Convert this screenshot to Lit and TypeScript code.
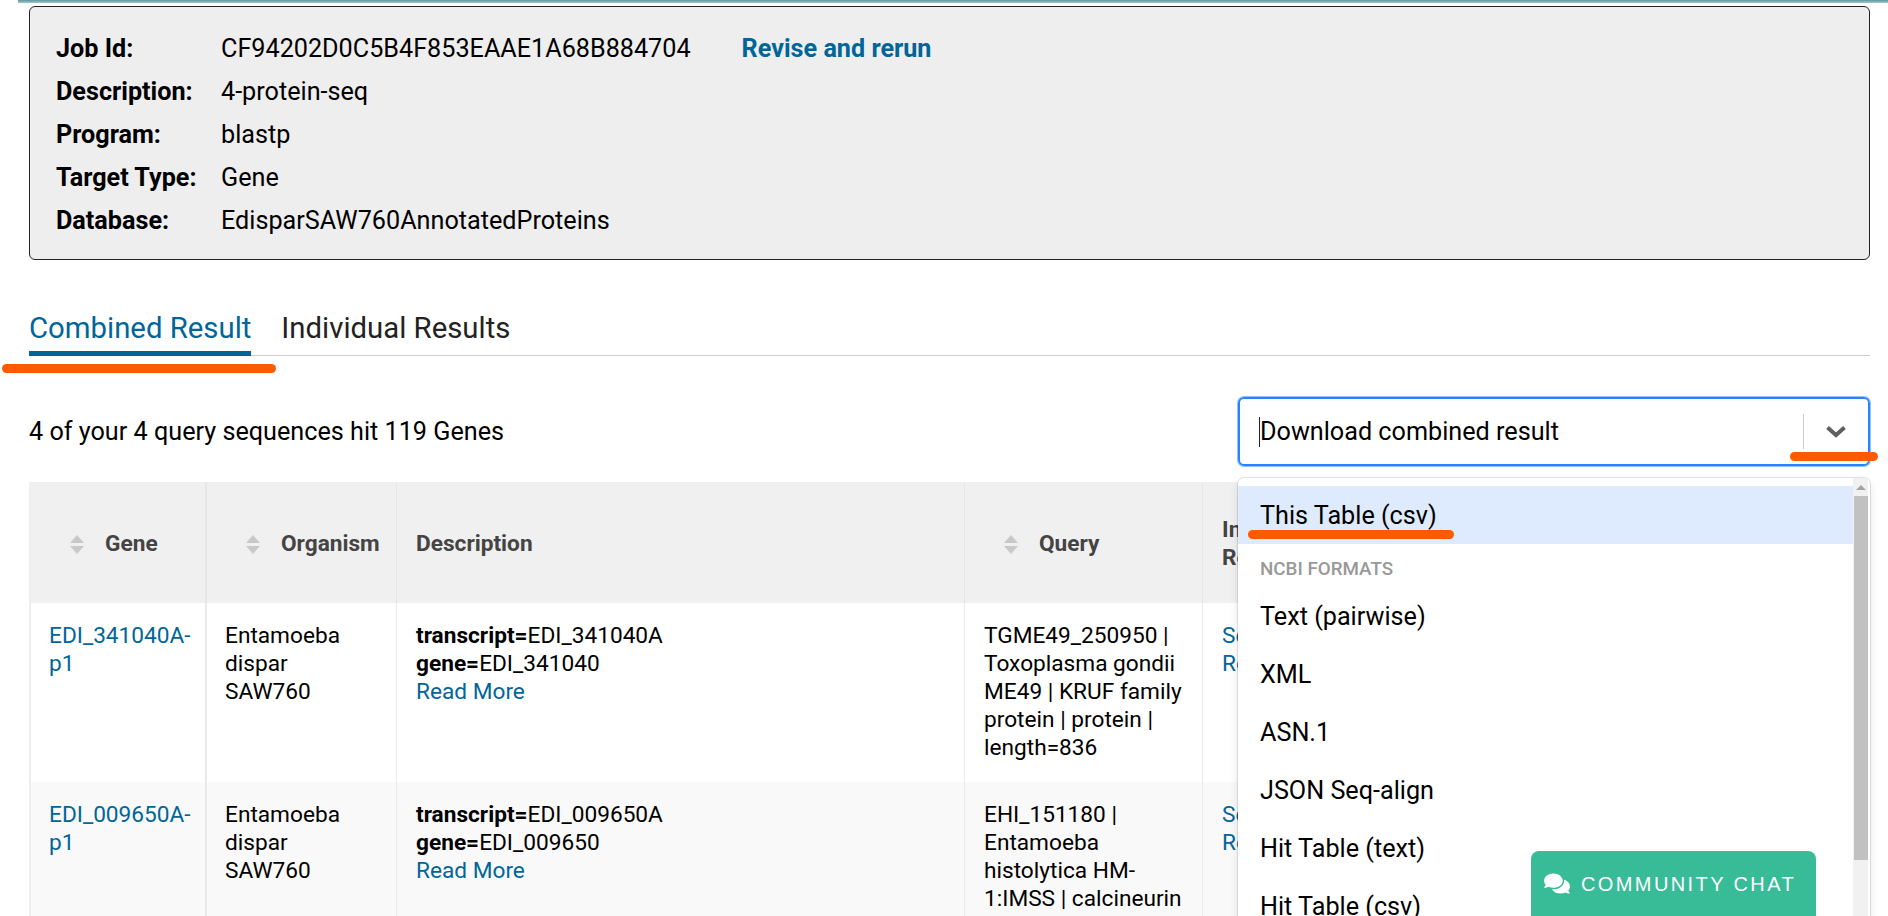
import { LitElement, css, html } from "lit";
import { customElement } from "lit/decorators.js";

const sortIcon = html`<svg class="sort" width="14" height="19" viewBox="0 0 14 19">
  <path d="M7 0 L14 8 L0 8 Z M0 11 L14 11 L7 19 Z"></path>
</svg>`;

@customElement("app-root")
export class AppRoot extends LitElement {
  // Templates ---------------------------------------------------------------

  renderJobRow(label: string, value: unknown) {
    return html`<div class="job-label">${label}</div>
      <div class="job-value">${value}</div>`;
  }

  renderTable() {
    return html`<table>
      <thead>
        <tr>
          <th class="gene sortable"><span class="th">${sortIcon}Gene</span></th>
          <th class="organism sortable"><span class="th">${sortIcon}Organism</span></th>
          <th class="desc">Description</th>
          <th class="query sortable"><span class="th">${sortIcon}Query</span></th>
          <th class="individual">Individual<br />Results</th>
        </tr>
      </thead>
      <tbody>
        <tr>
          <td><a>EDI_341040A-p1</a></td>
          <td>Entamoeba dispar SAW760</td>
          <td>
            <b>transcript=</b>EDI_341040A<br />
            <b>gene=</b>EDI_341040<br />
            <a>Read More</a>
          </td>
          <td>TGME49_250950 | Toxoplasma gondii ME49 | KRUF family protein | protein | length=836</td>
          <td><a>See<br />Results</a></td>
        </tr>
        <tr>
          <td><a>EDI_009650A-p1</a></td>
          <td>Entamoeba dispar SAW760</td>
          <td>
            <b>transcript=</b>EDI_009650A<br />
            <b>gene=</b>EDI_009650<br />
            <a>Read More</a>
          </td>
          <td>EHI_151180 | Entamoeba histolytica HM-1:IMSS | calcineurin protein | protein | length=510</td>
          <td><a>See<br />Results</a></td>
        </tr>
      </tbody>
    </table>`;
  }

  renderMenu() {
    const items = ["Text (pairwise)", "XML", "ASN.1", "JSON Seq-align", "Hit Table (text)", "Hit Table (csv)"];
    return html`<div class="menu">
      <div class="menu-list">
        <div class="option active">This Table (csv)</div>
        <div class="group">NCBI FORMATS</div>
        ${items.map((item) => html`<div class="option">${item}</div>`)}
      </div>
      <div class="scrollbar">
        <div class="scroll-arrow"></div>
        <div class="scroll-thumb"></div>
      </div>
    </div>`;
  }

  render() {
    return html`<div class="topbar"></div>
      <main>
        <section class="job">
          ${this.renderJobRow(
            "Job Id:",
            html`<span class="job-id">CF94202D0C5B4F853EAAE1A68B884704</span><a class="revise">Revise and rerun</a>`
          )}
          ${this.renderJobRow("Description:", "4-protein-seq")}
          ${this.renderJobRow("Program:", "blastp")}
          ${this.renderJobRow("Target Type:", "Gene")}
          ${this.renderJobRow("Database:", "EdisparSAW760AnnotatedProteins")}
        </section>

        <nav class="tabs">
          <div class="tab active">Combined Result</div>
          <div class="tab">Individual Results</div>
        </nav>

        <div class="toolbar">
          <div class="count">4 of your 4 query sequences hit 119 Genes</div>
          <div class="select-wrap">
            <div class="select">
              <div class="select-value"><span class="caret"></span>Download combined result</div>
              <div class="select-divider"></div>
              <svg class="chevron" width="20" height="12" viewBox="0 0 20 12">
                <path d="M1.5 1.5 L10 9 L18.5 1.5"></path>
              </svg>
            </div>
            ${this.renderMenu()}
          </div>
        </div>

        ${this.renderTable()}
      </main>

      <div class="mark mark-tab"></div>
      <div class="mark mark-chevron"></div>
      <div class="mark mark-option"></div>

      <div class="chat">
        <svg width="26" height="23" viewBox="0 0 576 512">
          <path
            d="M416 192c0-88.4-93.1-160-208-160S0 103.6 0 192c0 34.3 14.1 65.9 38 92-13.4 30.2-35.5 54.2-35.8 54.5-2.2 2.3-2.8 5.7-1.5 8.7S4.8 352 8 352c36.6 0 66.9-12.3 88.7-25 32.2 15.7 70.3 25 111.3 25 114.9 0 208-71.6 208-160zm122 220c23.9-26 38-57.7 38-92 0-66.9-53.5-124.2-129.3-148.1.9 6.6 1.3 13.3 1.3 20.1 0 105.9-107.7 192-240 192-10.8 0-21.3-.8-31.7-1.9C207.8 439.6 281.8 480 368 480c41 0 79.1-9.2 111.3-25 21.8 12.7 52.1 25 88.7 25 3.2 0 6.1-1.9 7.3-4.8 1.3-2.9.7-6.3-1.5-8.7-.3-.3-22.4-24.2-35.8-54.5z"
          ></path>
        </svg>
        <span class="chat-label">COMMUNITY CHAT</span>
      </div>`;
  }

  static styles = css`
    :host {
      display: block;
      position: relative;
      height: 916px;
      overflow: hidden;
      background: #fff;
      font-family: Roboto, "Liberation Sans", sans-serif;
      font-size: 22.67px;
      color: #000;
    }

    a {
      color: #006699;
    }

    .topbar {
      height: 3px;
      margin-left: 18px;
      background: linear-gradient(#5b9a9f, #a9c4c6);
    }

    main {
      padding: 3px 18px 0 29px;
    }

    /* Job summary ------------------------------------------------------- */

    .job {
      display: grid;
      grid-template-columns: 165px 1fr;
      grid-auto-rows: 43px;
      align-items: center;
      height: 254px;
      box-sizing: border-box;
      padding: 20px 26px 0;
      background: #eee;
      border: 1px solid #222;
      border-radius: 6px;
      font-size: 25.2px;
    }

    .job-label {
      font-weight: 700;
    }

    .job-id {
      margin-right: 51px;
    }

    .revise {
      font-weight: 700;
    }

    /* Tabs ---------------------------------------------------------------- */

    .tabs {
      display: flex;
      gap: 30px;
      margin-top: 50px;
      border-bottom: 1px solid #ccc;
    }

    .tab {
      height: 41px;
      line-height: 36px;
      font-size: 29.33px;
      color: #222;
    }

    .tab.active {
      color: #006699;
      border-bottom: 5px solid #006699;
      margin-bottom: -1px;
    }

    /* Toolbar and select -------------------------------------------------- */

    .toolbar {
      display: flex;
      align-items: center;
      justify-content: space-between;
      padding: 41px 0 16px;
    }

    .count {
      font-size: 25.2px;
    }

    .select-wrap {
      position: relative;
      width: 632px;
    }

    .select {
      display: flex;
      align-items: center;
      height: 69px;
      box-sizing: border-box;
      padding-left: 19px;
      border: 2px solid #2684ff;
      border-radius: 6px;
      box-shadow: 0 0 0 1px rgba(38, 132, 255, 0.5);
    }

    .select-value {
      display: flex;
      align-items: center;
      flex: 1;
      font-size: 25.2px;
    }

    .caret {
      width: 1px;
      height: 30px;
      background: #222;
    }

    .select-divider {
      width: 1px;
      height: 35px;
      background: #ccc;
    }

    .chevron {
      margin: 0 22px;
      flex: none;
    }

    .chevron path {
      fill: none;
      stroke: #606060;
      stroke-width: 4;
    }

    .menu {
      position: absolute;
      z-index: 2;
      top: 81px;
      left: 0;
      right: 0;
      height: 460px;
      display: flex;
      background: #fff;
      border-radius: 6px;
      box-shadow: 0 0 0 1px rgba(0, 0, 0, 0.1), 0 4px 11px rgba(0, 0, 0, 0.1);
      overflow: hidden;
    }

    .menu-list {
      flex: 1;
      padding-top: 8px;
    }

    .option {
      display: flex;
      align-items: center;
      height: 58px;
      padding-left: 22px;
      font-size: 25.2px;
    }

    .option.active {
      background: #deebff;
    }

    .group {
      display: flex;
      align-items: center;
      height: 36px;
      padding: 7px 0 0 22px;
      font-size: 18.8px;
      font-weight: 500;
      color: #999;
    }

    .scrollbar {
      width: 15px;
      margin-right: 2px;
      background: #f1f1f1;
    }

    .scroll-arrow {
      width: 0;
      margin: 7px auto 0;
      border: 5px solid transparent;
      border-top: 0;
      border-bottom: 5px solid #a3a3a3;
    }

    .scroll-thumb {
      height: 364px;
      margin: 6px 0 0 1px;
      background: #c1c1c1;
    }

    /* Results table ------------------------------------------------------- */

    table {
      width: 100%;
      table-layout: fixed;
      border-collapse: separate;
      border-spacing: 0;
      border-left: 2px solid #eee;
      line-height: 28px;
    }

    th {
      height: 121px;
      box-sizing: border-box;
      padding: 3px 0 0 19px;
      background: #f0f0f0;
      border-right: 1px solid #e6e6e6;
      text-align: left;
      font-weight: 700;
      color: #444;
    }

    th.sortable {
      padding-left: 39px;
    }

    th.gene {
      width: 176px;
      border-right-width: 2px;
    }

    th.organism {
      width: 190px;
    }

    th.desc {
      width: 568px;
    }

    th.query {
      width: 238px;
    }

    .th {
      display: flex;
      align-items: center;
      gap: 21px;
    }

    .sort {
      flex: none;
      fill: #c8c8c8;
    }

    td {
      height: 179px;
      box-sizing: border-box;
      padding: 19px 18px 0 19px;
      vertical-align: top;
      border-right: 1px solid #eaeaea;
    }

    td:first-child {
      border-right-width: 2px;
      padding: 19px 4px 0 18px;
    }

    td:nth-child(2) {
      padding-left: 18px;
    }

    tbody tr:nth-child(2) td {
      background: #f9f9f9;
    }

    b {
      font-weight: 700;
    }

    /* Overlays ------------------------------------------------------------ */

    .mark {
      position: absolute;
      z-index: 3;
      height: 9px;
      background: #ff5a00;
      border-radius: 5px;
    }

    .mark-tab {
      left: 2px;
      top: 364px;
      width: 274px;
    }

    .mark-chevron {
      left: 1790px;
      top: 452px;
      width: 88px;
    }

    .mark-option {
      left: 1248px;
      top: 530px;
      width: 206px;
    }

    .chat {
      position: absolute;
      z-index: 4;
      left: 1531px;
      top: 851px;
      width: 285px;
      height: 65px;
      display: flex;
      gap: 11px;
      box-sizing: border-box;
      padding: 21px 0 0 13px;
      background: #38bb97;
      border-radius: 8px 8px 0 0;
      color: #fff;
      font-family: "Liberation Sans", Arial, sans-serif;
      font-size: 20px;
      line-height: 22px;
      letter-spacing: 2.4px;
    }

    .chat svg {
      fill: #fff;
      flex: none;
    }

    .chat-label {
      margin-top: 1px;
    }
  `;
}

declare global {
  interface HTMLElementTagNameMap {
    "app-root": AppRoot;
  }
}
